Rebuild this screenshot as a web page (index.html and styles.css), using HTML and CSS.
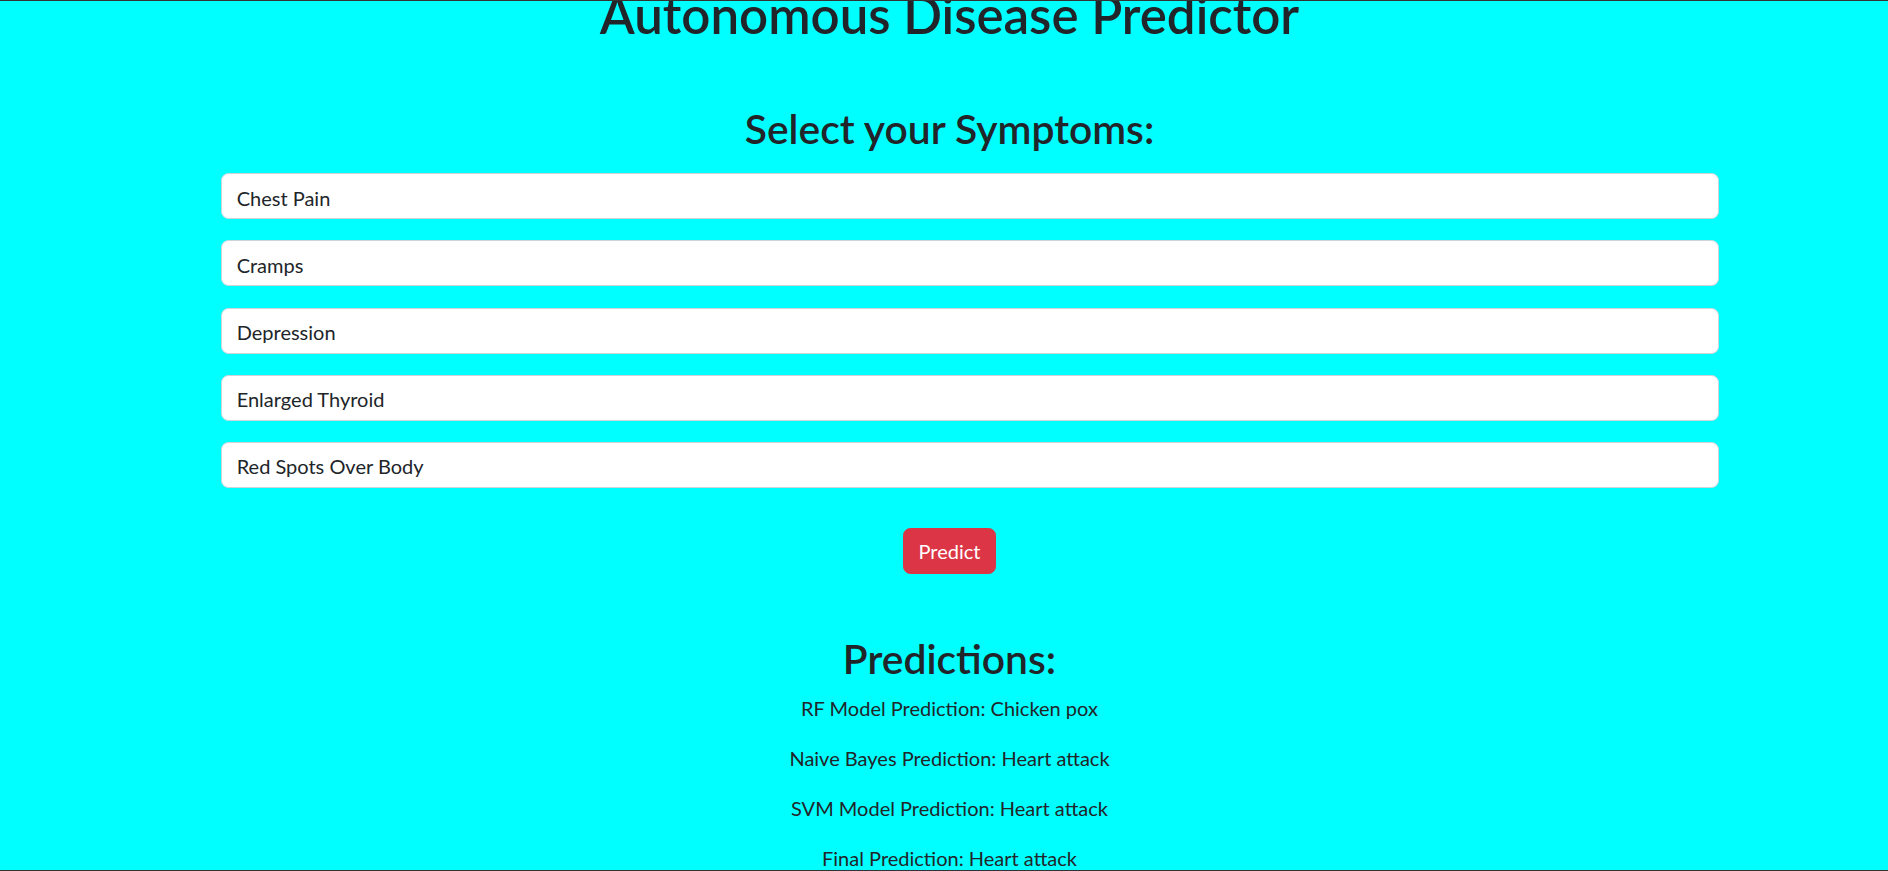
FILE: index.html
```html
<!DOCTYPE html>
<html lang="en">
<head>
<meta charset="utf-8">
<title>Autonomous Disease Predictor</title>
<link rel="stylesheet" href="styles.css">
</head>
<body>
<div class="page">
  <h1 class="title">Autonomous Disease Predictor</h1>
  <h2 class="section-title">Select your Symptoms:</h2>
  <form class="symptom-form">
    <div class="symptom-list">
      <input class="symptom" type="text" value="Chest Pain">
      <input class="symptom" type="text" value="Cramps">
      <input class="symptom" type="text" value="Depression">
      <input class="symptom" type="text" value="Enlarged Thyroid">
      <input class="symptom" type="text" value="Red Spots Over Body">
    </div>
    <div class="actions">
      <button class="btn-predict" type="button">Predict</button>
    </div>
  </form>
  <h2 class="section-title predictions-title">Predictions:</h2>
  <div class="results">
    <p class="result">RF Model Prediction: Chicken pox</p>
    <p class="result">Naive Bayes Prediction: Heart attack</p>
    <p class="result">SVM Model Prediction: Heart attack</p>
    <p class="result">Final Prediction: Heart attack</p>
  </div>
</div>
</body>
</html>
```
FILE: styles.css
```css
* { box-sizing: border-box; }

html, body {
  margin: 0;
  padding: 0;
  background: #00ffff;
  overflow: hidden;
}

body {
  font-family: Lato, "Liberation Sans", sans-serif;
  color: #212529;
  font-size: 20px;
}

body::after {
  content: "";
  position: fixed;
  inset: 0;
  border-top: 1px solid #333;
  border-bottom: 1px solid #333;
  pointer-events: none;
}

.page {
  padding-left: 11px;
  text-align: center;
}

.title {
  margin: -14.2px 0 0;
  font-size: 51px;
  line-height: 58px;
  font-weight: 600;
}

.section-title {
  margin: 61.7px 0 0;
  font-size: 40.8px;
  line-height: 46px;
  font-weight: 600;
}

.symptom-form {
  margin-top: 21.8px;
}

.symptom-list {
  display: flex;
  flex-direction: column;
  gap: 21.15px;
  width: 1498.6px;
  margin-left: 209.7px;
}

.symptom {
  display: block;
  width: 100%;
  height: 46px;
  padding: 3px 15px 0;
  border: 1px solid #ced4da;
  border-radius: 7.5px;
  background: #fff;
  color: #212529;
  font-family: inherit;
  font-size: 20px;
  outline: none;
}

.actions {
  display: flex;
  justify-content: center;
  margin-top: 40.4px;
}

.btn-predict {
  height: 46px;
  padding: 0 15px;
  border: 1px solid #dc3545;
  border-radius: 7.5px;
  background: #dc3545;
  color: #fff;
  font-family: inherit;
  font-size: 20px;
  line-height: 24px;
}

.predictions-title {
  margin-top: 61.9px;
}

.results {
  margin-top: 11.1px;
}

.result {
  margin: 0 0 20px;
  font-size: 20px;
  line-height: 30px;
}
```
